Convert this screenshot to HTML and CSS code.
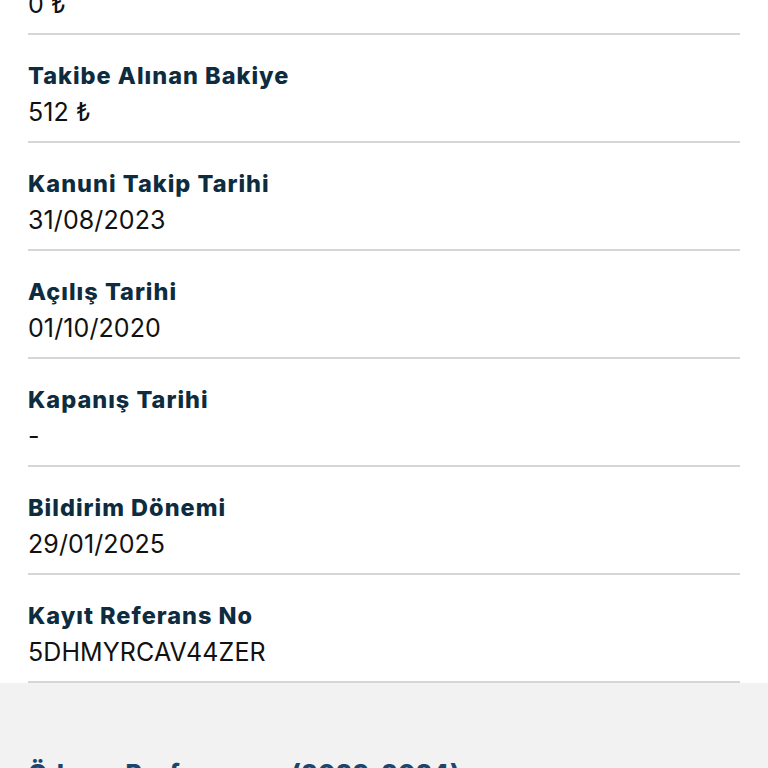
FILE: index.html
```html
<!DOCTYPE html>
<html lang="tr">
<head>
<meta charset="utf-8">
<link rel="stylesheet" href="styles.css">
</head>
<body>
<div class="details">
  <div class="list">
    <div class="row first">
      <div class="value">0 ₺</div>
    </div>
    <div class="row">
      <div class="label">Takibe Alınan Bakiye</div>
      <div class="value">512 ₺</div>
    </div>
    <div class="row">
      <div class="label">Kanuni Takip Tarihi</div>
      <div class="value">31/08/2023</div>
    </div>
    <div class="row">
      <div class="label">Açılış Tarihi</div>
      <div class="value">01/10/2020</div>
    </div>
    <div class="row">
      <div class="label">Kapanış Tarihi</div>
      <div class="value">-</div>
    </div>
    <div class="row">
      <div class="label">Bildirim Dönemi</div>
      <div class="value">29/01/2025</div>
    </div>
    <div class="row">
      <div class="label">Kayıt Referans No</div>
      <div class="value">5DHMYRCAV44ZER</div>
    </div>
  </div>
</div>
<div class="section">
  <h2 class="section-title">Ödeme Performansı (2023-2024)</h2>
</div>
</body>
</html>
```
FILE: styles.css
```css
html, body {
  margin: 0;
  padding: 0;
  background: #ffffff;
  font-family: "Inter", "DejaVu Sans", sans-serif;
}
.details {
  background: #ffffff;
  overflow: hidden;
}
.list {
  margin: 0 28px;
}
.row {
  padding: 25px 0 11px;
  border-bottom: 2px solid #d6d6d6;
}
.row.first {
  margin-top: -14px;
  padding-top: 0;
}
.label {
  font-size: 23.5px;
  line-height: 32px;
  font-weight: 800;
  color: #0e2c40;
  letter-spacing: 1px;
}
.value {
  margin-top: 2px;
  font-size: 25px;
  line-height: 36px;
  font-weight: 400;
  color: #111111;
  letter-spacing: 0.1px;
}
.row.first .value {
  margin-top: 0;
}
.section {
  background: #f2f2f2;
  padding: 72px 28px 40px;
}
.section-title {
  margin: 0;
  font-size: 25px;
  line-height: 36px;
  font-weight: 800;
  color: #1a466d;
  letter-spacing: 0.6px;
}
```
